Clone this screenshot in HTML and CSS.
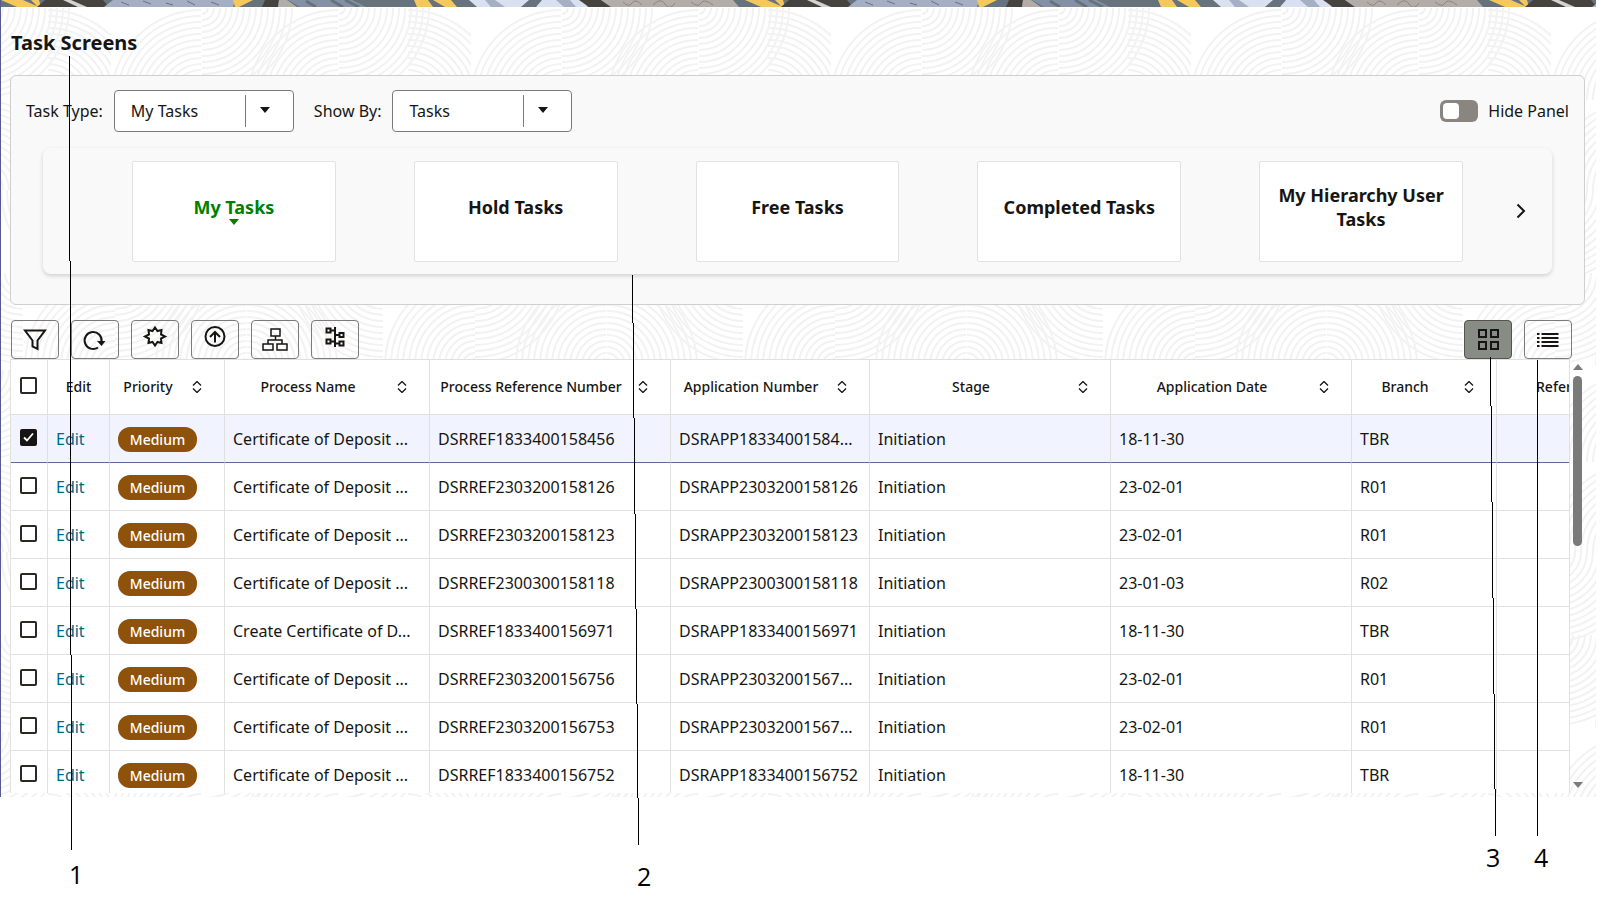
FILE: index.html
```
<!DOCTYPE html>
<html lang="en">
<head>
  <meta charset="UTF-8">
  <meta name="viewport" content="width=device-width, initial-scale=1.0">
  <title>Task Screens</title>
  <link rel="stylesheet" href="styles.css">
</head>
<body>
<div class="app">
  <svg class="banner" aria-hidden="true">
    <defs>
      <pattern id="bannerTile" width="744" height="7" patternUnits="userSpaceOnUse">
        <rect width="744" height="7" fill="#66737d"/>
        <path d="M0 0h22l16 7H16zM30 0h8l2 7h-3z" fill="#f5c85c"/>
        <path d="M44 0h58l6 7H36z" fill="#46433f"/>
        <path d="M62 0h8l16 7h-9z" fill="#d5d3d0"/>
        <path d="M112 0h122l-2 7H103z" fill="#a4afc3"/>
        <path d="M120 2l8 3M142 1l8 3M165 3l7 2M186 1l8 4M210 2l8 3" stroke="#66737d"/>
        <path d="M232 0h20l-14 7h-4z" fill="#f5c85c"/>
        <path d="M264 0h14l-1 7h-16z" fill="#46433f"/>
        <path d="M278 0h8l10 7h-19z" fill="#b2ada9"/>
        <path d="M287 0h64l14 7h-66z" fill="#8491a5"/>
        <path d="M305 1l10 6M330 0l12 7M344 0l14 7" stroke="#66737d" stroke-width="3"/>
        <path d="M413 0h14l5 7h-16zM432 0h18l6 7h-12z" fill="#f5c85c"/>
        <path d="M468 0h60l-8 7h-44z" fill="#d9e0ef"/>
        <path d="M484 0h10l10 7h-14z" fill="#a4afc3"/>
        <path d="M541 0h40l6 7h-52z" fill="#d9e0ef"/>
        <path d="M555 0h14l6 7h-12z" fill="#a4afc3"/>
        <path d="M578 0h22l10 7h-22z" fill="#46433f"/>
        <path d="M600 0h132l6 7H610z" fill="#b2ada9"/>
        <path d="M622 2q6 6 9 1t10 2M652 5q8-8 12-1t10-1M690 2q7 6 10 1t12 2" fill="none" stroke="#8b8682"/>
      </pattern>
    </defs>
    <rect width="100%" height="7" fill="url(#bannerTile)"/>
  </svg>

  <svg class="backdrop" aria-hidden="true">
    <defs>
      <!-- one quarter fan of concentric arcs, reused in all four directions -->
      <g id="fan" fill="none" stroke="#f2f2f2" stroke-width="2">
        <path d="M0 6A6 6 0 0 0 6 0M0 12A12 12 0 0 0 12 0M0 18A18 18 0 0 0 18 0M0 24A24 24 0 0 0 24 0M0 30A30 30 0 0 0 30 0M0 36A36 36 0 0 0 36 0M0 42A42 42 0 0 0 42 0M0 48A48 48 0 0 0 48 0M0 54A54 54 0 0 0 54 0M0 60A60 60 0 0 0 60 0M0 66A66 66 0 0 0 66 0M0 72A72 72 0 0 0 72 0M0 78A78 78 0 0 0 78 0M0 84A84 84 0 0 0 84 0M0 90A90 90 0 0 0 90 0"/>
      </g>
      <pattern id="waves" x="110" y="0" width="360" height="362" patternUnits="userSpaceOnUse">
        <use href="#fan" x="91"/>
        <use href="#fan" x="228"/>
        <use href="#fan" transform="translate(90 92) scale(-1 -1)"/>
        <use href="#fan" transform="translate(227 92) scale(-1 -1)"/>
        <use href="#fan" transform="translate(297 92) scale(1 -1)"/>
        <use href="#fan" transform="translate(90 182) scale(-1 -1)"/>
        <use href="#fan" x="0" y="182"/>
        <use href="#fan" transform="translate(227 182) scale(-1 -1)"/>
        <use href="#fan" transform="translate(228 182) scale(1 -1)"/>
        <use href="#fan" transform="translate(340 182) scale(-1 1)"/>
        <use href="#fan" transform="translate(272 265) scale(-1 1)"/>
        <use href="#fan" x="4" y="265"/>
        <use href="#fan" transform="translate(4 357) scale(-1 -1)"/>
        <use href="#fan" transform="translate(364 357) scale(-1 -1)"/>
        <use href="#fan" transform="translate(135 357) scale(-1 -1)"/>
        <use href="#fan" transform="translate(136 357) scale(1 -1)"/>
      </pattern>
    </defs>
    <rect width="100%" height="100%" fill="url(#waves)"/>
  </svg>

  <main class="content">
    <h1>Task Screens</h1>

    <section class="panel">
      <div class="filters">
        <label for="taskType">Task Type:</label>
        <select id="taskType"><option>My Tasks</option></select>
        <label class="show-by" for="showBy">Show By:</label>
        <select id="showBy"><option>Tasks</option></select>
        <label class="hide-panel"><input type="checkbox" class="switch">Hide Panel</label>
      </div>
      <div class="carousel">
        <button class="card active">My Tasks</button>
        <button class="card">Hold Tasks</button>
        <button class="card">Free Tasks</button>
        <button class="card">Completed Tasks</button>
        <button class="card">My Hierarchy User Tasks</button>
        <button class="next" aria-label="Next">
          <svg width="12" height="16" viewBox="0 0 12 16"><path d="M2.500 1.500L9 8l-6.500 6.500" fill="none" stroke="#161513" stroke-width="2"/></svg>
        </button>
      </div>
    </section>

    <div class="toolbar">
      <button aria-label="Filter"><svg viewBox="0 0 32 32"><path d="M6 6.500h20L18.500 16.500V25l-5-2.500v-6z"/></svg></button>
      <button aria-label="Refresh"><svg viewBox="0 0 32 32"><path d="M19 23.500A8.500 8.500 0 1 1 22.500 18"/><path class="solid" d="M18 17h8.500l-4 5z"/></svg></button>
      <button aria-label="Acquire"><svg viewBox="0 0 32 32"><path d="M16 3.500l2.500 3.500 4-1-.5 4.500 4 2-4 2 .5 4.500-4-1L16 21.500 13.500 18l-4 1 .5-4.500-4-2 4-2L9.500 6l4 1z"/></svg></button>
      <button aria-label="Escalate"><svg viewBox="0 0 32 32"><circle cx="16" cy="12.500" r="9.500"/><path d="M16 18.500V8M11 13l5-5 5 5"/></svg></button>
      <button aria-label="Delegate"><svg class="thin" viewBox="0 0 32 32"><path d="M12 5h9v7h-9zM4 20h10v6H4zM18 20h10v6H18zM16.500 12v4M9 20v-4h14v4"/></svg></button>
      <button aria-label="Flow diagram"><svg viewBox="0 0 32 32"><path d="M16 3v20M7.500 4.500h4v4h-4zM7.500 15.500h4v4h-4zM20.500 9h4v4h-4zM20.500 17.500h4v4h-4zM11.500 6.500H16M11.500 17.500H16M16 11h4.500M16 19.500h4.500"/></svg></button>
      <button class="grid-view" aria-label="Grid view"><svg viewBox="0 0 32 32"><path d="M7 6h7v7H7zM19 6h7v7h-7zM7 18h7v7H7zM19 18h7v7h-7z"/></svg></button>
      <button aria-label="List view"><svg viewBox="0 0 32 32"><path d="M5 10h2.500M9.500 10h17M5 14h2.500M9.500 14h17M5 18h2.500M9.500 18h17M5 22h2.500M9.500 22h17"/></svg></button>
    </div>

    <div class="grid">
      <div class="grid-body">
        <table>
          <colgroup>
            <col class="c-check"><col class="c-edit"><col class="c-priority"><col class="c-process"><col class="c-ref"><col class="c-app"><col><col><col class="c-branch"><col class="c-last">
          </colgroup>
          <thead>
            <tr>
              <th><input type="checkbox" aria-label="Select all"></th>
              <th>Edit</th>
              <th class="sortable">Priority</th>
              <th class="sortable">Process Name</th>
              <th class="sortable">Process Reference Number</th>
              <th class="sortable">Application Number</th>
              <th class="sortable">Stage</th>
              <th class="sortable">Application Date</th>
              <th class="sortable">Branch</th>
              <th class="cut">Reference</th>
            </tr>
          </thead>
          <tbody id="rows"></tbody>
        </table>
      </div>
      <div class="scrollbar" aria-hidden="true">
        <span class="up"></span>
        <span class="thumb"></span>
        <span class="down"></span>
      </div>
    </div>
  </main>
</div>

<!-- numbered callouts over the page -->
<svg class="callouts">
  <g stroke="#000" shape-rendering="crispEdges">
    <path d="M69.500 56L71.500 850M632.500 275L638.500 845M1490.500 357L1495.500 836M1537.500 360V836"/>
  </g>
  <text x="69" y="884">1</text>
  <text x="637" y="886">2</text>
  <text x="1486" y="867">3</text>
  <text x="1534" y="867">4</text>
</svg>

<script>
  const deposit = 'Certificate of Deposit ...';
  const tasks = [
    [deposit, 'DSRREF1833400158456', 'DSRAPP18334001584...', '18-11-30', 'TBR'],
    [deposit, 'DSRREF2303200158126', 'DSRAPP2303200158126', '23-02-01', 'R01'],
    [deposit, 'DSRREF2303200158123', 'DSRAPP2303200158123', '23-02-01', 'R01'],
    [deposit, 'DSRREF2300300158118', 'DSRAPP2300300158118', '23-01-03', 'R02'],
    ['Create Certificate of D...', 'DSRREF1833400156971', 'DSRAPP1833400156971', '18-11-30', 'TBR'],
    [deposit, 'DSRREF2303200156756', 'DSRAPP23032001567...', '23-02-01', 'R01'],
    [deposit, 'DSRREF2303200156753', 'DSRAPP23032001567...', '23-02-01', 'R01'],
    [deposit, 'DSRREF1833400156752', 'DSRAPP1833400156752', '18-11-30', 'TBR']
  ];

  document.getElementById('rows').innerHTML = tasks.map(([name, ref, app, date, branch], i) => `
    <tr class="${i === 0 ? 'selected' : ''}">
      <td><input type="checkbox" aria-label="Select ${ref}" ${i === 0 ? 'checked' : ''}></td>
      <td><a href="#">Edit</a></td>
      <td><span class="badge">Medium</span></td>
      <td>${name}</td>
      <td>${ref}</td>
      <td>${app}</td>
      <td>Initiation</td>
      <td>${date}</td>
      <td>${branch}</td>
      <td></td>
    </tr>`).join('');
</script>
</body>
</html>
```
FILE: styles.css
```
* {
  box-sizing: border-box;
}
body {
  margin: 0;
  min-height: 100vh;
  position: relative;
  background: #fff;
  color: #161513;
  font-family: "Noto Sans", "Open Sans", sans-serif;
  font-size: 16px;
}
button, select, input {
  font: inherit;
  color: inherit;
}
.app {
  position: relative;
  margin-right: 27px;
  border-left: 1px solid #555c8c;
  overflow: hidden;
}
.banner {
  display: block;
  width: 100%;
  height: 7px;
}
.backdrop {
  position: absolute;
  top: 8px;
  left: 0;
  width: 100%;
  height: 100%;
}
.content {
  position: relative;
  padding: 20px 11px 4px 9px;
}
h1 {
  margin: 0;
  padding-left: 1px;
  font-size: 20px;
  line-height: 32px;
}

/* filter panel */
.panel {
  margin-top: 16px;
  padding: 14px 32px 30px;
  background: #f9f9f9;
  border: 1px solid #cfcfcf;
  border-radius: 6px;
}
.filters {
  display: flex;
  align-items: center;
  margin: 0 -17px;
}
.filters label {
  margin-right: 11px;
}
.filters .show-by {
  margin-left: 20px;
}
.filters select {
  appearance: none;
  width: 180px;
  height: 42px;
  padding: 0 60px 0 16px;
  border: 1px solid #7d7b79;
  border-radius: 4px;
  background-color: #fff;
  background-image:
    url("data:image/svg+xml,%3Csvg xmlns='http://www.w3.org/2000/svg' width='10' height='6'%3E%3Cpath d='M0 0h10L5 6z' fill='%23161513'/%3E%3C/svg%3E"),
    linear-gradient(#7d7b79, #7d7b79);
  background-position: right 23px top 16px, right 47px top 4px;
  background-size: 10px 6px, 1px 32px;
  background-repeat: no-repeat;
}
.filters .hide-panel {
  display: flex;
  align-items: center;
  gap: 10px;
  margin: 0 0 0 auto;
}
.switch {
  appearance: none;
  width: 38px;
  height: 22px;
  margin: 0;
  padding: 3px;
  border-radius: 6px;
  background: #8b8580;
}
.switch::before {
  content: "";
  display: block;
  width: 16px;
  height: 16px;
  border-radius: 4px;
  background: #fff;
}
.carousel {
  position: relative;
  display: flex;
  gap: 78px;
  margin-top: 16px;
  padding: 13px 89px 12px;
  border-radius: 8px;
  box-shadow: 0 2px 4px rgba(0, 0, 0, 0.16);
}
.card {
  flex: 1;
  min-width: 0;
  height: 101px;
  padding: 0 12px 10px;
  background: #fff;
  border: 1px solid #e2e2e2;
  border-radius: 2px;
  font-size: 18px;
  font-weight: 700;
  line-height: 24px;
}
.card.active {
  position: relative;
  color: #008000;
}
.card.active::after {
  content: "";
  position: absolute;
  top: 57px;
  left: calc(50% - 5px);
  border: 5px solid transparent;
  border-top: 6px solid #008000;
  border-bottom: 0;
}
.next {
  position: absolute;
  right: 25px;
  top: 55px;
  padding: 0;
  border: 0;
  background: none;
  line-height: 0;
}

/* toolbar */
.toolbar {
  display: flex;
  gap: 12px;
  margin-top: 15px;
  padding: 0 13px 0 1px;
}
.toolbar button {
  width: 48px;
  height: 39px;
  padding: 0;
  border: 1px solid #7d7b79;
  border-radius: 4px;
  background: none;
  line-height: 0;
}
.toolbar svg {
  width: 32px;
  height: 32px;
  fill: none;
  stroke: #161513;
  stroke-width: 2;
}
.toolbar svg.thin {
  stroke-width: 1.5;
}
.toolbar .solid {
  fill: #161513;
  stroke: none;
}
.toolbar .grid-view {
  margin-left: auto;
  background: #878d85;
  border-color: #55524f;
}

/* task table */
.grid {
  display: flex;
  height: 434px;
}
.grid-body {
  flex: 1;
  min-width: 0;
  overflow: hidden;
  background: #fff;
  border: 1px solid #e0e0e0;
  border-bottom: 0;
}
table {
  width: 100%;
  table-layout: fixed;
  border-collapse: separate;
  border-spacing: 0;
}
.c-check { width: 37px; }
.c-edit { width: 62px; }
.c-priority { width: 115px; }
.c-process { width: 205px; }
.c-ref { width: 241px; }
.c-app { width: 199px; }
.c-branch { width: 145px; }
.c-last { width: 72px; }
th, td {
  padding: 0 0 0 8px;
  border-right: 1px solid #e0e0e0;
  border-bottom: 1px solid #e0e0e0;
  text-align: left;
  white-space: nowrap;
  overflow: hidden;
}
th:last-child, td:last-child {
  border-right: 0;
}
th {
  height: 55px;
  padding: 0 0 2px;
  font-size: 14px;
  font-weight: 500;
  text-align: center;
}
th:first-child, td:first-child {
  padding: 0 0 3px 9px;
  text-align: left;
}
th.cut {
  padding-left: 39px;
  text-align: left;
}
th.sortable {
  padding-right: 38px;
  background: url("data:image/svg+xml,%3Csvg xmlns='http://www.w3.org/2000/svg' width='10' height='12'%3E%3Cpath d='M1 4.500l4-4 4 4M1 7.500l4 4 4-4' fill='none' stroke='%23161513' stroke-width='1.300'/%3E%3C/svg%3E") right 22px center no-repeat;
}
td {
  height: 48px;
}
.selected td {
  background: #f1f4fe;
  border-bottom-color: #606a9b;
}
td a {
  color: #00688c;
  text-decoration: none;
}
td input, th input {
  appearance: none;
  display: block;
  width: 17px;
  height: 17px;
  margin: 0;
  border: 2px solid #2b2826;
  border-radius: 2px;
  background: #fff;
}
td input:checked {
  border-color: #161513;
  background: #161513 url("data:image/svg+xml,%3Csvg xmlns='http://www.w3.org/2000/svg' width='13' height='13'%3E%3Cpath d='M2 6.500l3 3 6-7' fill='none' stroke='white' stroke-width='1.800'/%3E%3C/svg%3E") center no-repeat;
}
.badge {
  display: block;
  width: 79px;
  margin-top: 2px;
  border-radius: 12px;
  background: #8f520a;
  color: #fff;
  font-size: 14px;
  font-weight: 500;
  line-height: 25px;
  text-align: center;
}
.scrollbar {
  display: flex;
  flex-direction: column;
  align-items: center;
  width: 15px;
  padding: 5px 0 5px;
}
.up, .down {
  border: 5px solid transparent;
}
.up {
  border-top: 0;
  border-bottom: 6px solid #7a7a7a;
}
.down {
  margin-top: auto;
  border-bottom: 0;
  border-top: 6px solid #7a7a7a;
}
.thumb {
  width: 9px;
  height: 40%;
  margin-top: 6px;
  border-radius: 5px;
  background: #7a7a7a;
}

.callouts {
  position: absolute;
  top: 0;
  left: 0;
  width: 100%;
  height: 100%;
  pointer-events: none;
  font-family: "Open Sans", sans-serif;
  font-size: 25px;
}
```
